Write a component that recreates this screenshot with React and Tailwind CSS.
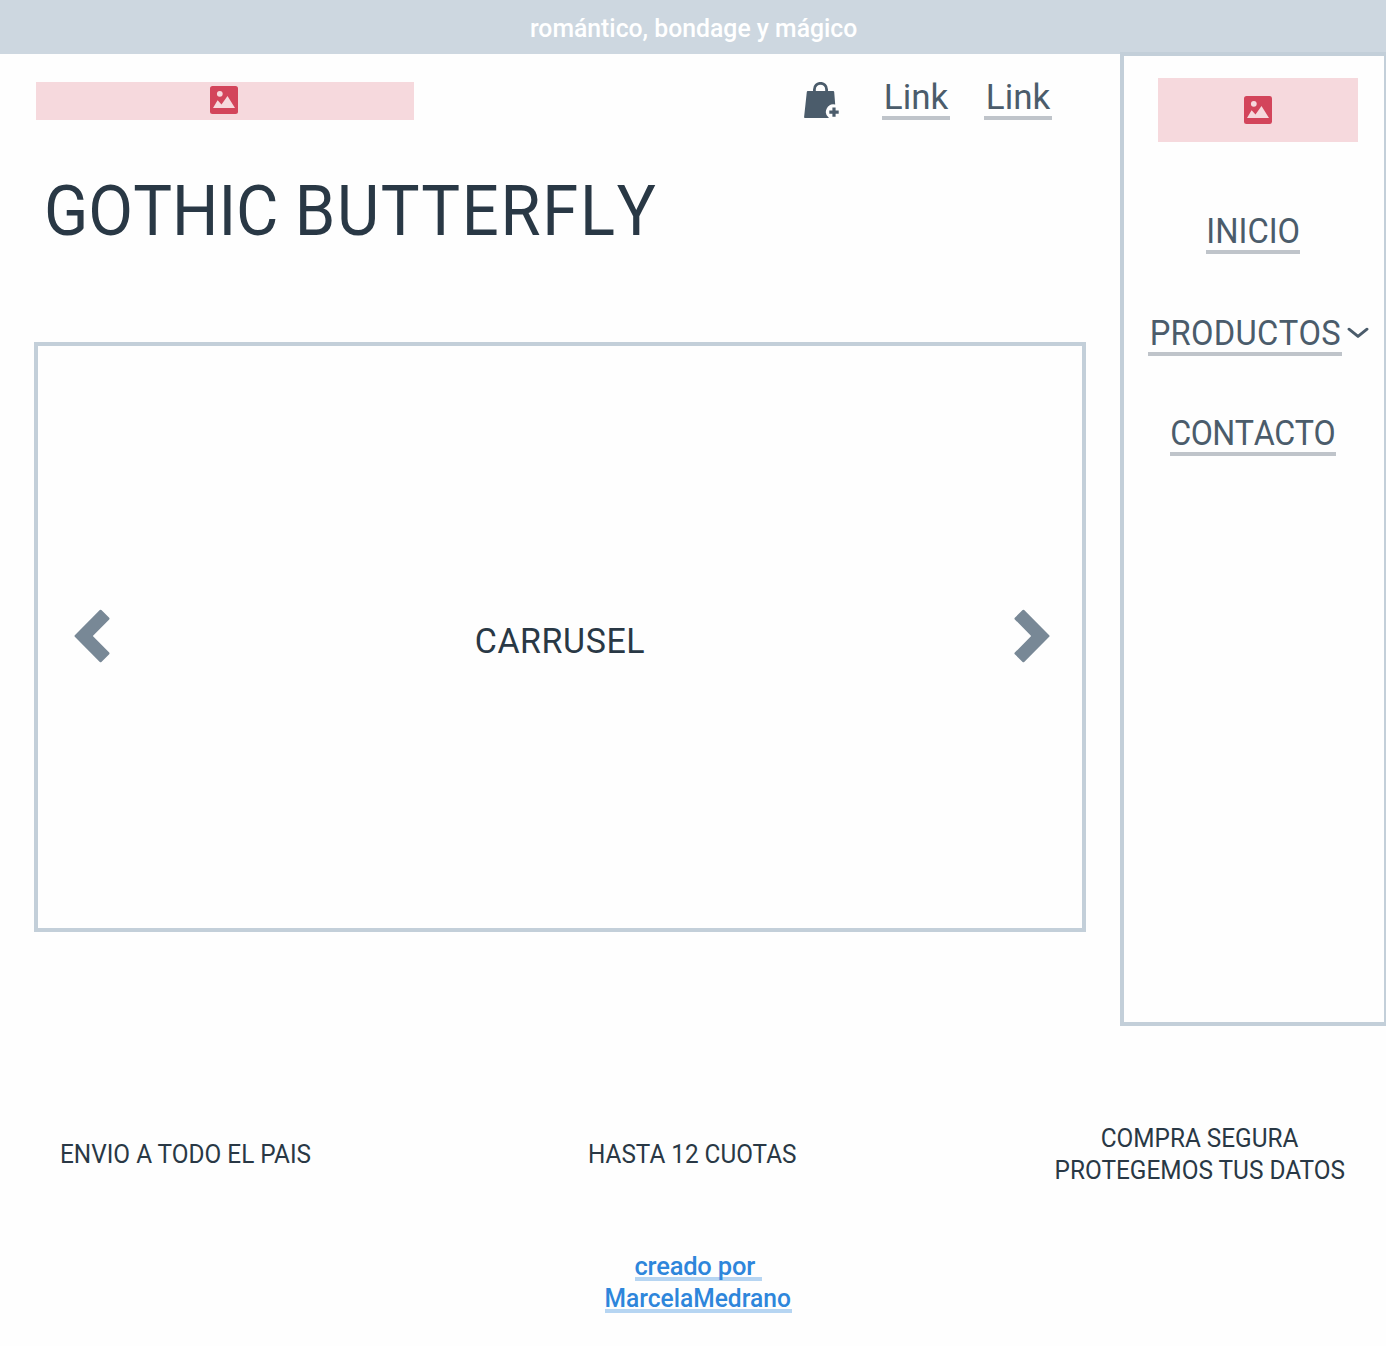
import React from "react";

function ImageIcon() {
  return (
    <svg width="28" height="28" viewBox="0 0 28 28" aria-hidden="true">
      <rect width="28" height="28" rx="2.5" fill="#d3455b" />
      <circle cx="9.8" cy="7.8" r="2.9" fill="#f6d9dd" />
      <path d="M3 22 7.6 14.2 11.5 18.4 17.5 10 25 22Z" fill="#f6d9dd" />
    </svg>
  );
}

function BagIcon({ className }) {
  return (
    <svg className={className} width="36" height="36" viewBox="0 0 36 36" aria-hidden="true">
      <path d="M10.4 10V7.4a6.1 6.1 0 0 1 12.2 0V10" fill="none" stroke="#4b5c6b" strokeWidth="2.8" />
      <path d="M3.8 9H29.2a1 1 0 0 1 1 .9L31.2 22.5A7.6 7.6 0 0 0 25 36H.9a.8.8 0 0 1-.8-.9L2.8 9.9a1 1 0 0 1 1-.9Z" fill="#4b5c6b" />
      <path d="M30 25.4v9.4M25.3 30.1h9.4" fill="none" stroke="#4b5c6b" strokeWidth="3.2" />
    </svg>
  );
}

function Arrow({ flip }) {
  return (
    <svg className={flip ? "shrink-0 -scale-x-100" : "shrink-0"} width="36" height="54" viewBox="0 0 36 54" aria-hidden="true">
      <path
        d="M.8 26.2 25.8 1.1Q26.6.3 27.4 1.1L35.2 8.8Q36 9.6 35.2 10.4L18.8 27 35.2 43.6Q36 44.4 35.2 45.2L27.4 52.9Q26.6 53.7 25.8 52.9L.8 27.8Q0 27 .8 26.2Z"
        fill="#788896"
      />
    </svg>
  );
}

function NavLink({ className, textClass = "", children }) {
  return (
    <a
      href="#"
      className={`flex h-[43px] justify-center whitespace-nowrap border-b-4 border-[#bfc4ca] pt-px text-[35px] leading-[40px] text-[#4b5c6b] ${className}`}
    >
      <span className={`block ${textClass}`}>{children}</span>
    </a>
  );
}

export default function App() {
  return (
    <div className="h-[1346px] w-[1386px] overflow-hidden bg-[#fefefe] font-[Roboto,sans-serif] text-[#293845]">
      <div className="flex h-[54px] items-center justify-center bg-[#cdd7e0] pt-0.5 pl-px text-[25.5px] font-medium leading-8 text-white">
        <span className="block scale-x-[0.971]">romántico, bondage y mágico</span>
      </div>

      <div className="flex">
        <main className="w-[1120px] shrink-0">
          <header className="flex h-[66px] items-end pl-9">
            <div className="flex h-[38px] w-[378px] items-center justify-center bg-[#f6d9dd] pr-0.5 pb-0.5">
              <ImageIcon />
            </div>
            <BagIcon className="mb-0.5 ml-[390px]" />
            <NavLink className="ml-[42px] w-[68px]">Link</NavLink>
            <NavLink className="ml-[34px] w-[68px]">Link</NavLink>
          </header>

          <h1 className="mt-[51px] ml-11 origin-left scale-x-[0.93] text-[70px] leading-[80px] [font-kerning:none]">
            GOTHIC <span className="tracking-[1.8px]">BUTTERFLY</span>
          </h1>

          <section className="mt-[91px] ml-[34px] flex h-[590px] w-[1052px] items-center justify-between border-4 border-[#c3cfd9] pr-8 pb-0.5 pl-9">
            <Arrow />
            <p className="scale-x-[0.97] pt-3 pr-[5px] text-[35px] leading-[40px] tracking-[0.6px]">CARRUSEL</p>
            <Arrow flip />
          </section>
        </main>

        <aside className="-mt-0.5 flex h-[974px] w-[266px] flex-col items-center border-4 border-r-2 border-[#c3cfd9]">
          <div className="mt-[22px] ml-2 flex h-16 w-[200px] items-center justify-center bg-[#f6d9dd]">
            <ImageIcon />
          </div>
          <nav className="mt-[69px] flex w-full flex-col items-center pr-0.5 [font-kerning:none]">
            <NavLink className="w-[94px]" textClass="scale-x-[0.935]">INICIO</NavLink>
            <div className="mt-[59px] ml-6 flex items-start gap-[5px] self-start">
              <NavLink className="w-[194px]" textClass="scale-x-[0.935] tracking-[0.3px]">PRODUCTOS</NavLink>
              <svg className="mt-3.5" width="22" height="12" viewBox="0 0 22 12" aria-hidden="true">
                <path d="M2 2.2 11 9.4 20 2.2" fill="none" stroke="#4b5c6b" strokeWidth="2.9" strokeLinecap="round" strokeLinejoin="round" />
              </svg>
            </div>
            <NavLink className="mt-[57px] w-[166px]" textClass="scale-x-[0.92] tracking-[-0.5px]">CONTACTO</NavLink>
          </nav>
        </aside>
      </div>

      <footer className="pt-24">
        <div className="grid grid-cols-[528px_466px_1fr] items-center pl-[60px] text-[25.5px] leading-8">
          <p className="origin-left scale-x-[0.955]">ENVIO A TODO EL PAIS</p>
          <p className="origin-left scale-x-[0.953]">HASTA 12 CUOTAS</p>
          <div className="flex w-[291px] flex-col items-center whitespace-nowrap">
            <p className="scale-x-[0.955]">COMPRA SEGURA</p>
            <p className="scale-x-[0.957]">PROTEGEMOS TUS DATOS</p>
          </div>
        </div>
        <a href="#" className="mt-16 flex flex-col items-center gap-px pl-2.5 text-[25.5px] font-medium leading-8 text-[#2e86db]">
          <span className="block h-[31px] w-[127px] whitespace-pre border-b-4 border-[#b6d5f2] tracking-[-0.2px]">{"creado por "}</span>
          <span className="flex h-[31px] w-[187px] justify-center border-b-4 border-[#b6d5f2]">
            <span className="block scale-x-[0.964]">MarcelaMedrano</span>
          </span>
        </a>
      </footer>
    </div>
  );
}
